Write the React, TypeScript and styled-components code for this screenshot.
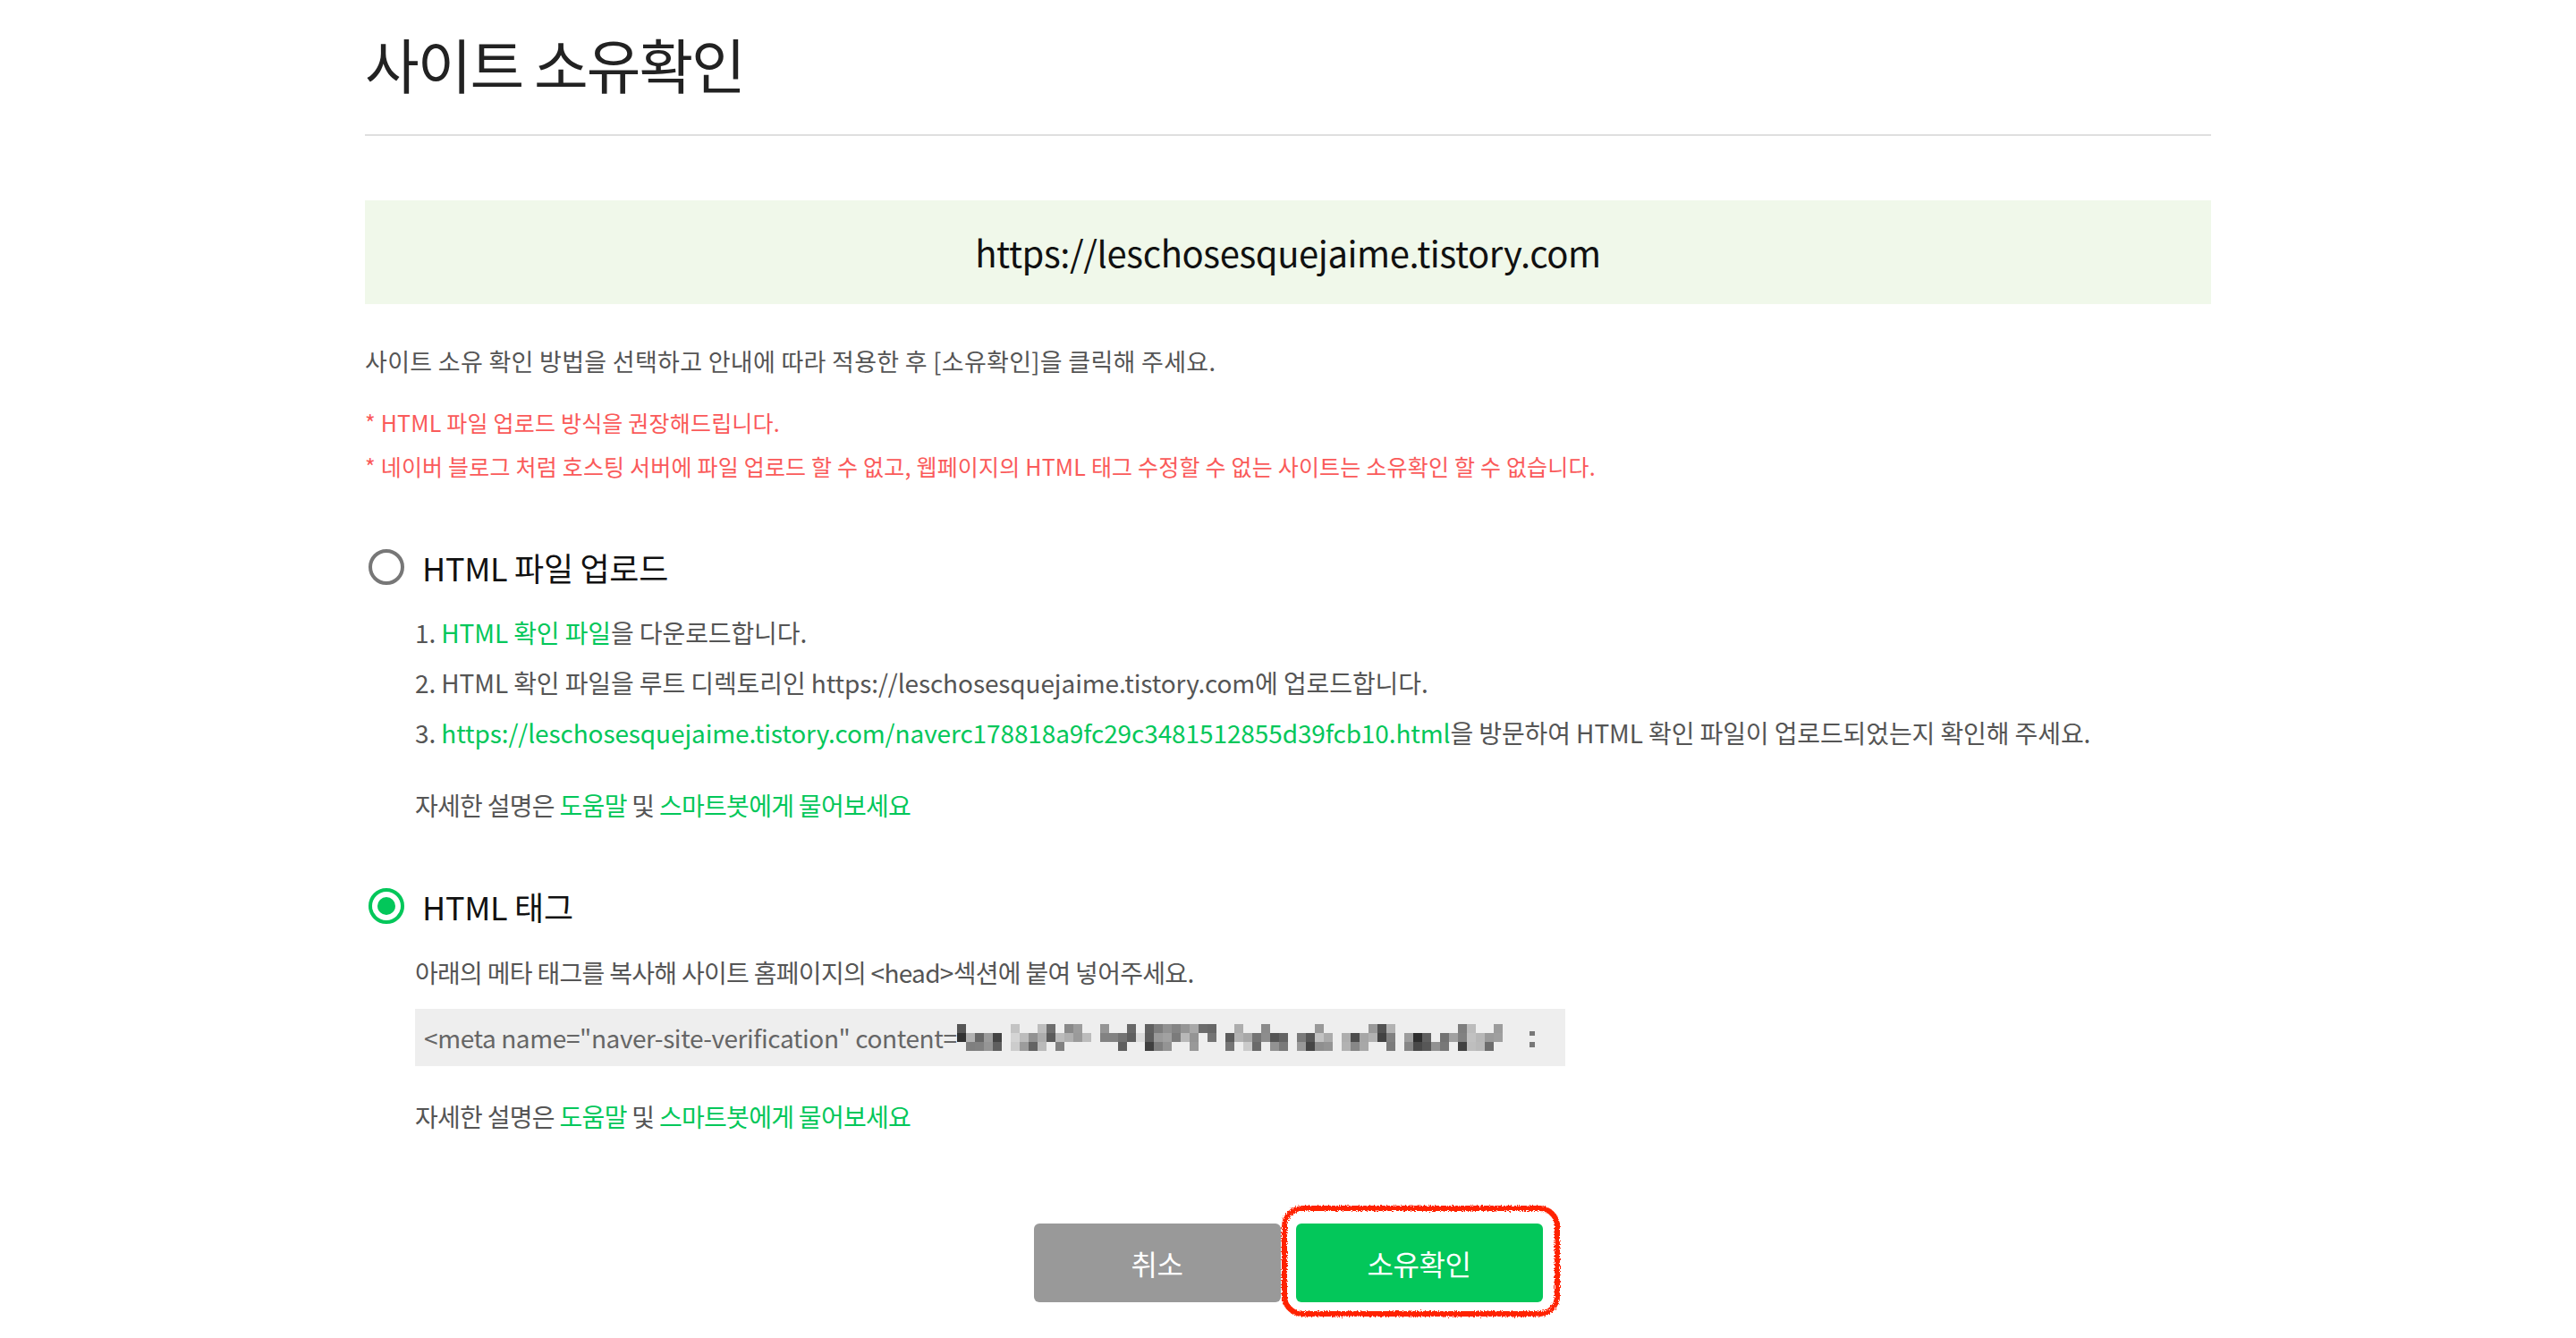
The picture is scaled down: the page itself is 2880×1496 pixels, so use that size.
import React from 'react';
import styled, { createGlobalStyle } from 'styled-components';

const GlobalStyle = createGlobalStyle`
  html, body {
    margin: 0;
    padding: 0;
    background: #fff;
  }

  body {
    font-family: "Noto Sans CJK KR", "Noto Sans", sans-serif;
    color: #555;
  }
`;

const SITE = 'https://leschosesquejaime.tistory.com';
const FILE_URL = `${SITE}/naverc178818a9fc29c3481512855d39fcb10.html`;

// pixelated (blurred) verification code, drawn as a mosaic
const mosaicCells = (() => {
  let seed = 23;
  const rnd = () => {
    seed = (seed * 16807) % 2147483647;
    return seed / 2147483647;
  };
  const cells: { x: number; y: number; fill: string }[] = [];
  for (let c = 0; c < 63; c++) {
    const kind = rnd();
    if (c > 0 && kind < 0.08) continue;
    const rows = kind < 0.45 ? [0, 1, 2] : kind < 0.8 ? [1, 2] : [0, 1];
    const base = 80 + rnd() * 120;
    rows.forEach((r) => {
      if (rnd() < 0.12) return;
      const shade = Math.min(220, Math.floor(base + (rnd() - 0.5) * 70));
      cells.push({ x: c * 10, y: r * 10, fill: `rgb(${shade},${shade},${shade})` });
    });
  }
  return cells;
})();

const Page = styled.main`
  width: 2064px;
  margin: 0 auto;
  padding-bottom: 40px;
`;

const Header = styled.header`
  padding-top: 30px;
  border-bottom: 2px solid #dfdfdf;
  height: 120px;
`;

const Title = styled.h1`
  margin: 0;
  font-size: 66px;
  line-height: 80px;
  font-weight: 400;
  letter-spacing: -2px;
  color: #222;
`;

const SiteBox = styled.div`
  margin-top: 72px;
  height: 116px;
  background: #f0f8ea;
  display: flex;
  align-items: center;
  justify-content: center;
  font-size: 40px;
  letter-spacing: -0.4px;
  color: #111;
`;

const Intro = styled.p`
  margin: 44px 0 0;
  font-size: 27px;
  line-height: 40px;
  letter-spacing: 0.3px;
  color: #555;
`;

const Notes = styled.div`
  margin-top: 24px;
`;

const Note = styled.p`
  margin: 0;
  font-size: 25px;
  line-height: 49px;
  letter-spacing: 0.2px;
  color: #fa5a5a;
`;

const Method = styled.section<{ $gap: number }>`
  margin-top: ${(p) => p.$gap}px;
`;

const MethodHead = styled.label`
  display: flex;
  align-items: center;
  gap: 20px;
  height: 60px;
  padding-left: 4px;
  font-size: 36px;
  letter-spacing: -0.3px;
  color: #111;
`;

const Radio = styled.span<{ $checked?: boolean }>`
  box-sizing: border-box;
  width: 40px;
  height: 40px;
  border-radius: 50%;
  border: 4px solid ${(p) => (p.$checked ? '#03c75a' : '#777')};
  display: flex;
  align-items: center;
  justify-content: center;
  background: #fff;

  &::after {
    content: '';
    width: 20px;
    height: 20px;
    border-radius: 50%;
    background: ${(p) => (p.$checked ? '#03c75a' : 'transparent')};
  }
`;

const Body = styled.div`
  padding-left: 56px;
`;

const Steps = styled.ol`
  list-style: none;
  margin: 15px 0 0;
  padding: 0;
`;

const Line = styled.li`
  font-size: 28px;
  line-height: 56px;
  letter-spacing: -0.1px;
  color: #555;
`;

const Text = styled.p<{ $top: number }>`
  margin: ${(p) => p.$top}px 0 0;
  font-size: 28px;
  line-height: 56px;
  letter-spacing: -0.7px;
  color: #555;
`;

const Link = styled.a`
  color: #03c75a;
  text-decoration: none;
`;

const CodeBox = styled.div`
  margin-top: 13px;
  width: 1286px;
  height: 64px;
  box-sizing: border-box;
  padding: 0 10px;
  background: #eee;
  display: flex;
  align-items: center;
  font-size: 28px;
  letter-spacing: -0.4px;
  color: #666;
  white-space: nowrap;
`;

const Mosaic = styled.svg`
  flex: none;
`;

const Actions = styled.div`
  margin-top: 92px;
  display: flex;
  justify-content: center;
  gap: 17px;
`;

const Button = styled.button<{ $primary?: boolean }>`
  position: relative;
  width: 276px;
  height: 88px;
  border: none;
  border-radius: 6px;
  background: ${(p) => (p.$primary ? '#03c75a' : '#999')};
  color: #fff;
  font-family: inherit;
  font-size: 32px;
  letter-spacing: -0.5px;
  cursor: pointer;
`;

const Scribble = styled.svg`
  position: absolute;
  left: -17px;
  top: -21px;
  pointer-events: none;
  overflow: visible;
`;

const Help = ({ top }: { top: number }) => (
  <Text $top={top}>
    자세한 설명은 <Link href="#">도움말</Link> 및 <Link href="#">스마트봇에게 물어보세요</Link>
  </Text>
);

export default function App() {
  return (
    <>
      <GlobalStyle />
      <Page>
        <Header>
          <Title>사이트 소유확인</Title>
        </Header>

        <SiteBox>{SITE}</SiteBox>

        <Intro>사이트 소유 확인 방법을 선택하고 안내에 따라 적용한 후 [소유확인]을 클릭해 주세요.</Intro>
        <Notes>
          <Note>* HTML 파일 업로드 방식을 권장해드립니다.</Note>
          <Note>
            * 네이버 블로그 처럼 호스팅 서버에 파일 업로드 할 수 없고, 웹페이지의 HTML 태그 수정할 수 없는 사이트는 소유확인 할 수 없습니다.
          </Note>
        </Notes>

        <Method $gap={58}>
          <MethodHead>
            <Radio />
            HTML 파일 업로드
          </MethodHead>
          <Body>
            <Steps>
              <Line>
                1. <Link href="#">HTML 확인 파일</Link>을 다운로드합니다.
              </Line>
              <Line>2. HTML 확인 파일을 루트 디렉토리인 {SITE}에 업로드합니다.</Line>
              <Line>
                3. <Link href="#">{FILE_URL}</Link>을 방문하여 HTML 확인 파일이 업로드되었는지 확인해 주세요.
              </Line>
            </Steps>
            <Help top={25} />
          </Body>
        </Method>

        <Method $gap={55}>
          <MethodHead>
            <Radio $checked />
            HTML 태그
          </MethodHead>
          <Body>
            <Text $top={16}>아래의 메타 태그를 복사해 사이트 홈페이지의 &lt;head&gt;섹션에 붙여 넣어주세요.</Text>
            <CodeBox>
              &lt;meta name="naver-site-verification" content=
              <Mosaic width={650} height={30} viewBox="0 0 650 30">
                {mosaicCells.map((c, i) => (
                  <rect key={i} x={c.x} y={c.y} width={10} height={10} fill={c.fill} />
                ))}
                <rect x={640} y={8} width={6} height={5} fill="#777" />
                <rect x={640} y={20} width={6} height={6} fill="#777" />
              </Mosaic>
            </CodeBox>
            <Help top={28} />
          </Body>
        </Method>

        <Actions>
          <Button type="button">취소</Button>
          <Button type="button" $primary>
            소유확인
            <Scribble width={313} height={126} viewBox="0 0 313 126">
              <defs>
                <filter id="rough">
                  <feTurbulence type="fractalNoise" baseFrequency="0.8" numOctaves="2" result="noise" />
                  <feDisplacementMap in="SourceGraphic" in2="noise" scale="5" />
                </filter>
              </defs>
              <rect
                x={4}
                y={4}
                width={305}
                height={118}
                rx={20}
                fill="none"
                stroke="#ff2400"
                strokeWidth={6}
                filter="url(#rough)"
              />
            </Scribble>
          </Button>
        </Actions>
      </Page>
    </>
  );
}
